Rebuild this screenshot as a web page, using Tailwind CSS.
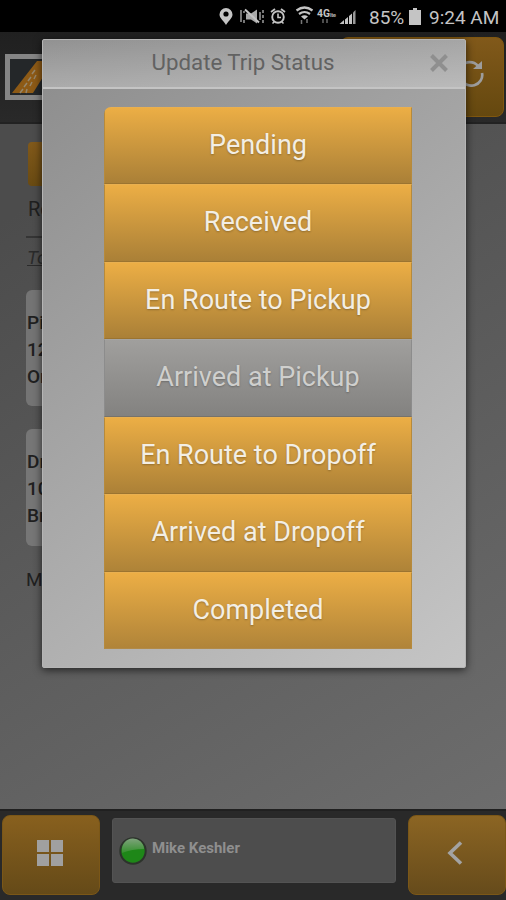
<!DOCTYPE html>
<html lang="en">

<head>
    <meta charset="UTF-8">
    <meta name="viewport" content="width=device-width, initial-scale=1.0">
    <title>Update Trip Status</title>
    <script src="https://cdn.jsdelivr.net/npm/@tailwindcss/browser@4"></script>
</head>

<body class="bg-black font-[Roboto,sans-serif]">
    <div class="relative w-[506px] h-[900px] overflow-hidden flex flex-col">

        <!-- status bar -->
        <div class="h-8 shrink-0 bg-black flex items-center justify-end pr-[6px] text-[#c4c4c4] text-[19px] leading-none whitespace-nowrap">
            <svg class="w-[150px] h-[32px] mr-[5px]" viewBox="0 0 150 32" fill="none" stroke="#c4c4c4">
                <path d="M12 25c-3-5-6.500-7-6.500-10.500a6.500 6.500 0 0 1 13 0C18.500 18 15 20 12 25z" fill="#c4c4c4" stroke="none" />
                <circle cx="12" cy="14" r="2.600" fill="#000" stroke="none" />
                <path d="M32 13.500h5l6-4v14l-6-4h-5z" fill="#aaa" stroke="none" />
                <path d="M31 9.500l14 13" stroke-width="2" />
                <path d="M27 10v12M30 11v2M30 20v3M46 12v8M49 10v3M49 15v3M49 20v3" stroke-width="1.200" />
                <circle cx="64" cy="17" r="5.800" stroke-width="1.900" />
                <path d="M64 13.500v4h3M60.500 21.500l-2 2M67.500 21.500l2 2" stroke-width="1.600" />
                <path d="M57 12l4-3M67 9l4 3" stroke-width="1.800" />
                <path d="M82.500 10.500q8-6 16 0M85 14q5.500-4 11 0" stroke-width="2.200" />
                <path d="M87 16.500q3.500-2.500 7 0l-3.500 3z" fill="#c4c4c4" stroke="none" />
                <path d="M87.500 24v-4M93 19v4" stroke="#777" stroke-width="1.500" />
                <text x="103" y="17" font-size="10" font-weight="700" font-family="Roboto" fill="#c4c4c4" stroke="none" textLength="13" lengthAdjust="spacingAndGlyphs">4G</text>
                <text x="116" y="16.500" font-size="6" font-weight="700" font-family="Roboto" fill="#aaa" stroke="none" textLength="6">lte</text>
                <path d="M109 19v4M113 19v4" stroke="#777" stroke-width="1.300" />
                <path d="M125.500 24l4.500-4v4zM131 19.500l3-2.500v7h-3zM135 16l3-2.500V24h-3z" fill="#c4c4c4" stroke="none" />
                <path d="M139 12.500l2.500-2.500v14H139z" fill="#999" stroke="none" />
            </svg>
            <span class="w-[40px] mt-[2px]">85%</span>
            <svg class="w-[12px] h-[17px] mr-[8px]" viewBox="0 0 12 17">
                <path d="M4 0h4v2h4v15H0V2h4z" fill="#c4c4c4" />
            </svg>
            <span class="mt-[2px] w-[71px]">9:24 AM</span>
        </div>

        <!-- app header -->
        <div class="h-[92px] shrink-0 bg-linear-to-b from-[#202020] to-[#292929] border-b-2 border-[#222] flex items-start justify-between pl-[5px] pr-[2px]">
            <svg class="w-[84px] h-[47px] mt-[22px]" viewBox="0 0 84 47">
                <rect x="2.500" y="2.500" width="79" height="41" fill="#242729" stroke="#858585" stroke-width="5" />
                <path d="M7 39L32 7H48L28 39z" fill="#8d5a16" />
                <path d="M15 39l3-4M19 33l3-4M23 27l3-4M27 20l3-4M21 39l1-4M25 32l2-4M29 25l2-4" stroke="#95866c" stroke-width="1.500" />
            </svg>
            <div class="w-[164px] h-[80px] mt-[5px] rounded-lg bg-linear-to-b from-[#81591a] to-[#65480f] border border-[#80570f] flex items-center justify-end pr-[18px]">
                <svg class="w-[30px] h-[30px] mt-[-10px]" viewBox="0 0 30 30" fill="none" stroke="#9d9d9d" stroke-width="2.700">
                    <path d="M4 12A11 10 0 0 1 23 9" />
                    <path d="M27 4v8h-9z" fill="#9d9d9d" stroke="none" />
                    <path d="M27 16A11 10.500 0 0 1 6 22" />
                </svg>
            </div>
        </div>

        <!-- page behind the dialog -->
        <div class="h-[685px] shrink-0 bg-linear-[150deg] from-[#4c4c4c] from-10% to-[#6d6d6d] pl-[26px] pt-[18px] text-[#202020] text-[19px] font-medium">
            <div class="w-[120px] h-[44px] ml-[2px] rounded bg-linear-to-b from-[#81591a] to-[#694a12]"></div>
            <div class="h-[28px] mt-[9px] ml-[2px] leading-[28px] font-normal text-[20px]">Route</div>
            <div class="w-[300px] border-t-2 border-[#353535] mt-[13px]"></div>
            <div class="mt-[8px] ml-[1px] leading-[24px] italic underline font-normal text-[#2b2b2b]">Today</div>
            <div class="w-[420px] h-[116px] mt-[20px] pt-[19px] rounded-md bg-[#747474] leading-[27px] pl-[1px]">
                <p>Pickup</p>
                <p>123 Main</p>
                <p>Orlando</p>
            </div>
            <div class="w-[420px] h-[117px] mt-[23px] pt-[19px] rounded-md bg-[#767676] leading-[27px] pl-[1px]">
                <p>Dropoff</p>
                <p>100 Main</p>
                <p>Brandon</p>
            </div>
            <p class="mt-[20px] leading-[28px] font-normal">Miles</p>
        </div>

        <!-- bottom bar -->
        <div class="h-[91px] shrink-0 bg-[#292929] border-t-2 border-[#202020] flex items-start">
            <div class="w-[98px] h-[80px] mt-[4px] ml-[2px] rounded-lg bg-linear-to-b from-[#88601e] to-[#654a18] border border-[#7b5717] flex items-center justify-center">
                <div class="grid grid-cols-2 gap-[2px] mt-[-4px] mr-[2px]">
                    <div class="size-[12px] bg-[#a0a0a0]"></div>
                    <div class="size-[12px] bg-[#a0a0a0]"></div>
                    <div class="size-[12px] bg-[#a0a0a0]"></div>
                    <div class="size-[12px] bg-[#a0a0a0]"></div>
                </div>
            </div>
            <div class="w-[284px] h-[65px] mt-[7px] ml-[12px] rounded-[3px] bg-[#4d4d4d] border border-[#535353] flex items-start pl-[6px]">
                <svg class="size-[28px] mt-[18px]" viewBox="0 0 28 28">
                    <defs>
                        <linearGradient id="shine" x1="0" y1="0" x2="0" y2="1">
                            <stop offset="0" stop-color="#7fa37c" />
                            <stop offset="1" stop-color="#33902c" />
                        </linearGradient>
                    </defs>
                    <circle cx="14" cy="14" r="12.700" fill="#1e8718" stroke="#2c332b" stroke-width="2" />
                    <path d="M3 13a11 11 0 0 1 22-1Q13 12 3 16z" fill="url(#shine)" />
                </svg>
                <span class="ml-[5px] mt-[19px] text-[15px] leading-[20px] font-bold text-[#8f8f8f]">Mike Keshler</span>
            </div>
            <div class="w-[98px] h-[80px] mt-[4px] ml-[12px] shrink-0 rounded-lg bg-linear-to-b from-[#8c6523] to-[#664b1b] border border-[#7b5717] flex items-center justify-center">
                <svg class="w-[16px] h-[24px] mt-[-5px] mr-[4px]" viewBox="0 0 16 24" fill="none" stroke="#a3a3a3" stroke-width="3.600">
                    <path d="M14 1.500L3 12l11 10.500" />
                </svg>
            </div>
        </div>

        <!-- trip status dialog -->
        <div class="absolute left-[42px] top-[39px] w-[424px] h-[629px] rounded-[2px] bg-linear-[140deg] from-[#8c8c8c] to-[#c5c5c5] border border-[#b5b5b5] shadow-[0_2px_8px_rgba(0,0,0,0.65)]">
            <div class="relative h-[49px] bg-linear-to-b from-white/5 to-white/25 border-b-2 border-[#c4c4c4] flex justify-center pr-[22px]">
                <h1 class="text-[22.250px] leading-[45px] text-[#626262]">Update Trip Status</h1>
                <svg class="absolute right-[17px] top-[14px] size-[18px]" viewBox="0 0 18 18" stroke="#8f8f8f" stroke-width="4">
                    <path d="M1.500 1.500l15 15M16.500 1.500l-15 15" />
                </svg>
            </div>
            <div class="w-[308px] h-[542px] mt-[18px] ml-[61px] grid grid-rows-7 rounded-tl-[7px] overflow-hidden text-center text-[27px] leading-[75px] text-[#f3eee4] text-shadow-[0_1px_2px_rgba(0,0,0,0.25)]">
                <div class="bg-linear-to-b from-[#ecae45] to-[#aa8037] border border-t-[#e9b050] border-x-[#b68a3c] border-b-[#9b7430]">Pending</div>
                <div class="bg-linear-to-b from-[#ecae45] to-[#aa8037] border border-t-[#e9b050] border-x-[#b68a3c] border-b-[#9b7430]">Received</div>
                <div class="bg-linear-to-b from-[#ecae45] to-[#aa8037] border border-t-[#e9b050] border-x-[#b68a3c] border-b-[#9b7430]">En Route to Pickup</div>
                <div class="bg-linear-to-b from-[#a09f9d] to-[#838280] border border-t-[#a6a5a2] border-x-[#8c8c8c] border-b-[#77736b] text-[#cfcfcd]">Arrived at Pickup</div>
                <div class="bg-linear-to-b from-[#ecae45] to-[#ac8137] border border-t-[#e9b050] border-x-[#b68a3c] border-b-[#9b7430]">En Route to Dropoff</div>
                <div class="bg-linear-to-b from-[#ecae45] to-[#ae8338] border border-t-[#e9b050] border-x-[#b68a3c] border-b-[#9b7430]">Arrived at Dropoff</div>
                <div class="bg-linear-to-b from-[#ecae45] to-[#b08439] border border-t-[#e9b050] border-x-[#b68a3c] border-b-[#b18a48]">Completed</div>
            </div>
        </div>

    </div>
</body>

</html>
